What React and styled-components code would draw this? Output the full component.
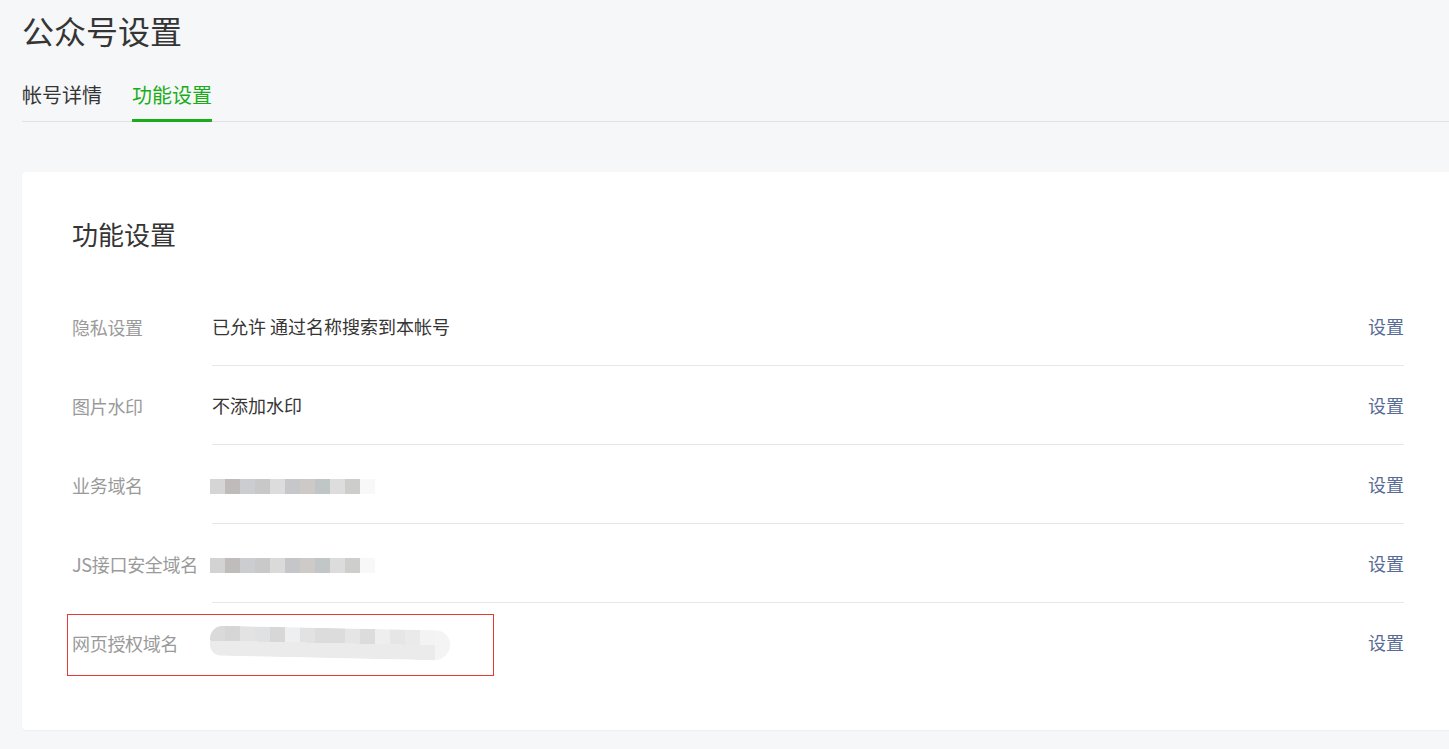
import React from 'react'
import styled, { createGlobalStyle } from 'styled-components'

const GlobalStyle = createGlobalStyle`
  html, body {
    margin: 0;
    padding: 0;
    background: #f6f7f9;
    font-family: "Noto Sans CJK SC", "Noto Sans", sans-serif;
    overflow: hidden;
  }
`

const mosaic = ['#d6d5d5', '#bfbbbb', '#cbcdd1', '#c8c8c8', '#dcdcdc', '#c5c7ca', '#cdc9c7', '#c0c5c6', '#dddddd', '#cdcdcb', '#f8f8f8']
const mosaic2 = ['#d3d3d3', '#c0bcbc', '#cbcdd1', '#c9c9c9', '#dadada', '#c4c6c9', '#cecac8', '#c1c6c7', '#dcdcdc', '#cececc', '#f8f8f8']
const smear = ['#dadada', '#d6d6d6', '#e3e3e3', '#e0e1e3', '#d8d7d8', '#eeeff0', '#e2e2e3', '#dcdcdc', '#dcdcdc', '#e5e5e6', '#dcdcdc', '#eeeeee', '#e6e6e6', '#eaeaea', '#f3f3f3', '#f6f6f6']

const rows = [
  { id: 1, label: '隐私设置', value: '已允许 通过名称搜索到本帐号' },
  { id: 2, label: '图片水印', value: '不添加水印' },
  { id: 3, label: '业务域名', blur: mosaic },
  { id: 4, label: 'JS接口安全域名', blur: mosaic2 },
  { id: 5, label: '网页授权域名', smear: true, marked: true },
]

const App = () => {
  return (
    <Page>
      <GlobalStyle />
      <Title>公众号设置</Title>
      <Tabs>
        <Tab>帐号详情</Tab>
        <Tab active>功能设置</Tab>
      </Tabs>
      <Card>
        <CardTitle>功能设置</CardTitle>
        <List>
          {rows.map(({ id, label, value, blur, smear: isSmear, marked }, idx) => (
            <Row key={id}>
              <Label>{label}</Label>
              <Content last={idx === rows.length - 1}>
                {value && <Value>{value}</Value>}
                {blur && (
                  <Mosaic>
                    {blur.map((c, i) => (
                      <Pixel key={i} color={c} />
                    ))}
                  </Mosaic>
                )}
                {isSmear && (
                  <Smear>
                    {smear.map((c, i) => (
                      <SmearPixel key={i} color={c} />
                    ))}
                  </Smear>
                )}
                <Action>设置</Action>
              </Content>
              {marked && <Marker />}
            </Row>
          ))}
        </List>
      </Card>
    </Page>
  )
}

export default App

const Page = styled.div`
  padding: 8px 0 0 22px;
  min-height: 100vh;
  box-sizing: border-box;
`
const Title = styled.h1`
  margin: 0;
  font-size: 32px;
  font-weight: normal;
  line-height: 44px;
  color: #353535;
`
const Tabs = styled.div`
  display: flex;
  gap: 30px;
  margin-top: 29px;
  border-bottom: 1px solid #e0e1e4;
`
const Tab = styled.div`
  font-size: 20px;
  line-height: 28px;
  padding-bottom: 10px;
  margin-bottom: -1px;
  color: ${(p) => (p.active ? '#1aad19' : '#353535')};
  border-bottom: 3px solid ${(p) => (p.active ? '#1aad19' : 'transparent')};
`
const Card = styled.div`
  margin-top: 50px;
  margin-right: -10px;
  background: #ffffff;
  border-radius: 4px;
  box-shadow: 0 1px 2px rgba(0, 0, 0, 0.04);
  padding: 44px 55px 48px 50px;
`
const CardTitle = styled.h2`
  margin: 0;
  font-size: 26px;
  font-weight: normal;
  line-height: 36px;
  color: #353535;
`
const List = styled.div`
  margin-top: 35px;
`
const Row = styled.div`
  display: flex;
  position: relative;
`
const Label = styled.div`
  flex: 0 0 140px;
  font-size: 18px;
  color: #9a9a9a;
  display: flex;
  align-items: center;
  white-space: nowrap;
  letter-spacing: -0.3px;
`
const Content = styled.div`
  flex: 1;
  height: 78px;
  display: flex;
  align-items: center;
  border-bottom: 1px solid ${(p) => (p.last ? 'transparent' : '#e7e7eb')};
`
const Value = styled.div`
  font-size: 18px;
  color: #353535;
`
const Mosaic = styled.div`
  display: flex;
  margin-left: -2px;
  margin-top: 4px;
`
const Pixel = styled.span`
  width: 15px;
  height: 15px;
  background: ${(p) => p.color};
`
const Smear = styled.div`
  display: flex;
  margin-left: -2px;
  margin-top: 2px;
  height: 30px;
  border-radius: 15px 16px 18px 12px;
  overflow: hidden;
  transform: skewY(1.2deg);
`
const SmearPixel = styled.span`
  width: 15px;
  height: 30px;
  background: linear-gradient(${(p) => p.color} 50%, #ebebeb 50%);
  &:last-child {
    background: #f4f4f4;
  }
`
const Action = styled.div`
  margin-left: auto;
  font-size: 18px;
  color: #576b95;
`
const Marker = styled.div`
  position: absolute;
  left: -5px;
  top: 11px;
  width: 425px;
  height: 60px;
  border: 1px solid #e53935;
  pointer-events: none;
`
